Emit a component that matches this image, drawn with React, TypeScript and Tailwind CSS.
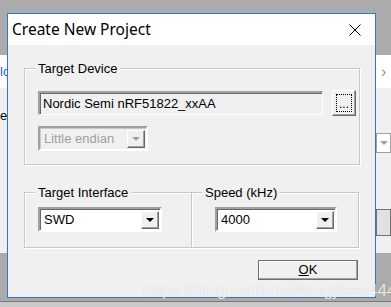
import React from 'react';

const Arrow = ({ disabled }: { disabled?: boolean }) => (
    <svg width="8" height="4" viewBox="0 0 8 4">
        <polygon points="0,0 8,0 4,4" fill={disabled ? '#a0a0a0' : '#000'} />
    </svg>
);

const DropButton = ({ disabled }: { disabled?: boolean }) => (
    <div className="w-[18px] h-full flex items-center justify-center bg-[#f0f0f0] border-t border-l border-t-white border-l-white border-b border-r border-b-[#696969] border-r-[#696969] shadow-[inset_-1px_-1px_0_#a0a0a0]">
        <Arrow disabled={disabled} />
    </div>
);

const Combo = ({ value, width, disabled }: { value: string; width: string; disabled?: boolean }) => (
    <div className={`${width} h-[25px] flex border-t-2 border-l-2 border-t-[#a0a0a0] border-l-[#a0a0a0] border-b-2 border-r-2 border-b-white border-r-white`}>
        <div className={`flex-1 flex items-stretch border-t border-l border-[#696969] ${disabled ? 'bg-[#f0f0f0] border-[#c8c8c8]' : 'bg-white'}`}>
            <span className={`flex-1 pl-[3px] flex items-center text-[13px] ${disabled ? 'text-[#a0a0a0]' : 'text-black'}`}>
                {value}
            </span>
            <div className="py-[1px] pr-[1px]">
                <DropButton disabled={disabled} />
            </div>
        </div>
    </div>
);

const GroupBox = ({ label, className, children }: { label: string; className: string; children: React.ReactNode }) => (
    <div className={`relative border border-[#c8c8c8] shadow-[inset_1px_1px_0_#fff,1px_1px_0_#fff] ${className}`}>
        <span className="absolute -top-[8px] left-[10px] px-[3px] bg-[#f0f0f0] text-[13px] leading-[16px] text-black">
            {label}
        </span>
        {children}
    </div>
);

export default function App() {
    return (
        <div
            className="relative w-[391px] h-[307px] overflow-hidden bg-[#ababab]"
            style={{ fontFamily: '"Liberation Sans", Arial, sans-serif' }}
        >
            {/* window behind, left */}
            <div className="absolute left-0 top-[55px] w-[7px] h-[198px] bg-[#f0f0f0] flex flex-col overflow-hidden">
                <div className="h-[33px] bg-white text-[#1a5fb4] text-[13px] leading-[33px] whitespace-nowrap">
                    lc
                </div>
                <div className="mt-[18px] text-[13px] whitespace-nowrap">ea</div>
            </div>
            {/* window behind, right */}
            <div className="absolute left-[376px] top-[55px] w-[15px] h-[198px] bg-[#f0f0f0] flex flex-col">
                <div className="h-[33px] bg-white text-[#999] text-[16px] leading-[33px] pl-[5px]">›</div>
                <div className="mt-[45px] h-[20px] border border-[#a0a0a0] bg-white flex items-center pl-[3px]">
                    <Arrow disabled />
                </div>
                <div className="mt-[56px] h-[27px] border border-[#707070] bg-[#e1e1e1]" />
            </div>
            {/* strip at bottom */}
            <div className="absolute left-0 top-[301px] w-full h-[6px] bg-[#c9c9c9] border-t border-[#7a7a7a]" />

            {/* dialog */}
            <div className="absolute left-[7px] top-[13px] w-[369px] h-[285px] border border-[#2b79d0] bg-[#f0f0f0] flex flex-col">
                <div className="h-[31px] bg-white flex items-center justify-between pl-[4px] pr-[14px]">
                    <span className="text-[15.5px] text-black" style={{ fontFamily: '"Noto Sans", "Open Sans", sans-serif' }}>
                        Create New Project
                    </span>
                    <svg width="12" height="12" viewBox="0 0 12 12">
                        <path d="M0.5 0.5 L11.5 11.5 M11.5 0.5 L0.5 11.5" stroke="#000" strokeWidth="1" />
                    </svg>
                </div>

                <div className="flex flex-col px-[16px] pt-[23px]">
                    <GroupBox label="Target Device" className="w-[336px] h-[97px] pt-[21px] pl-[13px]">
                        <div className="flex items-center gap-[9px]">
                            <div className="w-[285px] h-[24px] flex border-t-2 border-l-2 border-t-[#a0a0a0] border-l-[#a0a0a0] border-b border-r border-b-white border-r-white">
                                <div className="flex-1 border-t border-l border-[#696969] bg-[#f0f0f0] flex items-center pl-[2px] text-[13px] text-black">
                                    Nordic Semi nRF51822_xxAA
                                </div>
                            </div>
                            <div className="w-[24px] h-[26px] p-[3px] bg-[#f0f0f0] border-t border-l border-t-white border-l-white border-b border-r border-b-[#696969] border-r-[#696969] shadow-[inset_-1px_-1px_0_#a0a0a0]">
                                <div className="w-full h-full border border-dotted border-black flex items-end justify-center text-[12px] leading-[14px] text-black">
                                    ...
                                </div>
                            </div>
                        </div>
                        <div className="mt-[10px]">
                            <Combo value="Little endian" width="w-[110px]" disabled />
                        </div>
                    </GroupBox>

                    <div className="flex mt-[27px]">
                        <GroupBox label="Target Interface" className="w-[168px] h-[56px] pt-[14px] pl-[13px]">
                            <Combo value="SWD" width="w-[124px]" />
                        </GroupBox>
                        <GroupBox label="Speed (kHz)" className="w-[168px] h-[56px] pt-[14px] pl-[23px] -ml-px">
                            <Combo value="4000" width="w-[122px]" />
                        </GroupBox>
                    </div>

                    <div className="flex justify-end mt-[12px] pr-[1px]">
                        <div className="w-[100px] h-[20px] bg-[#f0f0f0] border border-[#707070] shadow-[inset_-1px_-1px_0_#a0a0a0,inset_1px_1px_0_#fff] flex items-center justify-center text-[13px] text-black">
                            <span><span className="underline">O</span>K</span>
                        </div>
                    </div>
                </div>
            </div>

            {/* watermark */}
            <div className="absolute left-[143px] top-[278px] text-[17px] text-white/80 whitespace-nowrap [text-shadow:0_0_1px_rgba(0,0,0,0.2)]">
                https://blog.csdn.net/fangjiaze444
            </div>
        </div>
    );
}
